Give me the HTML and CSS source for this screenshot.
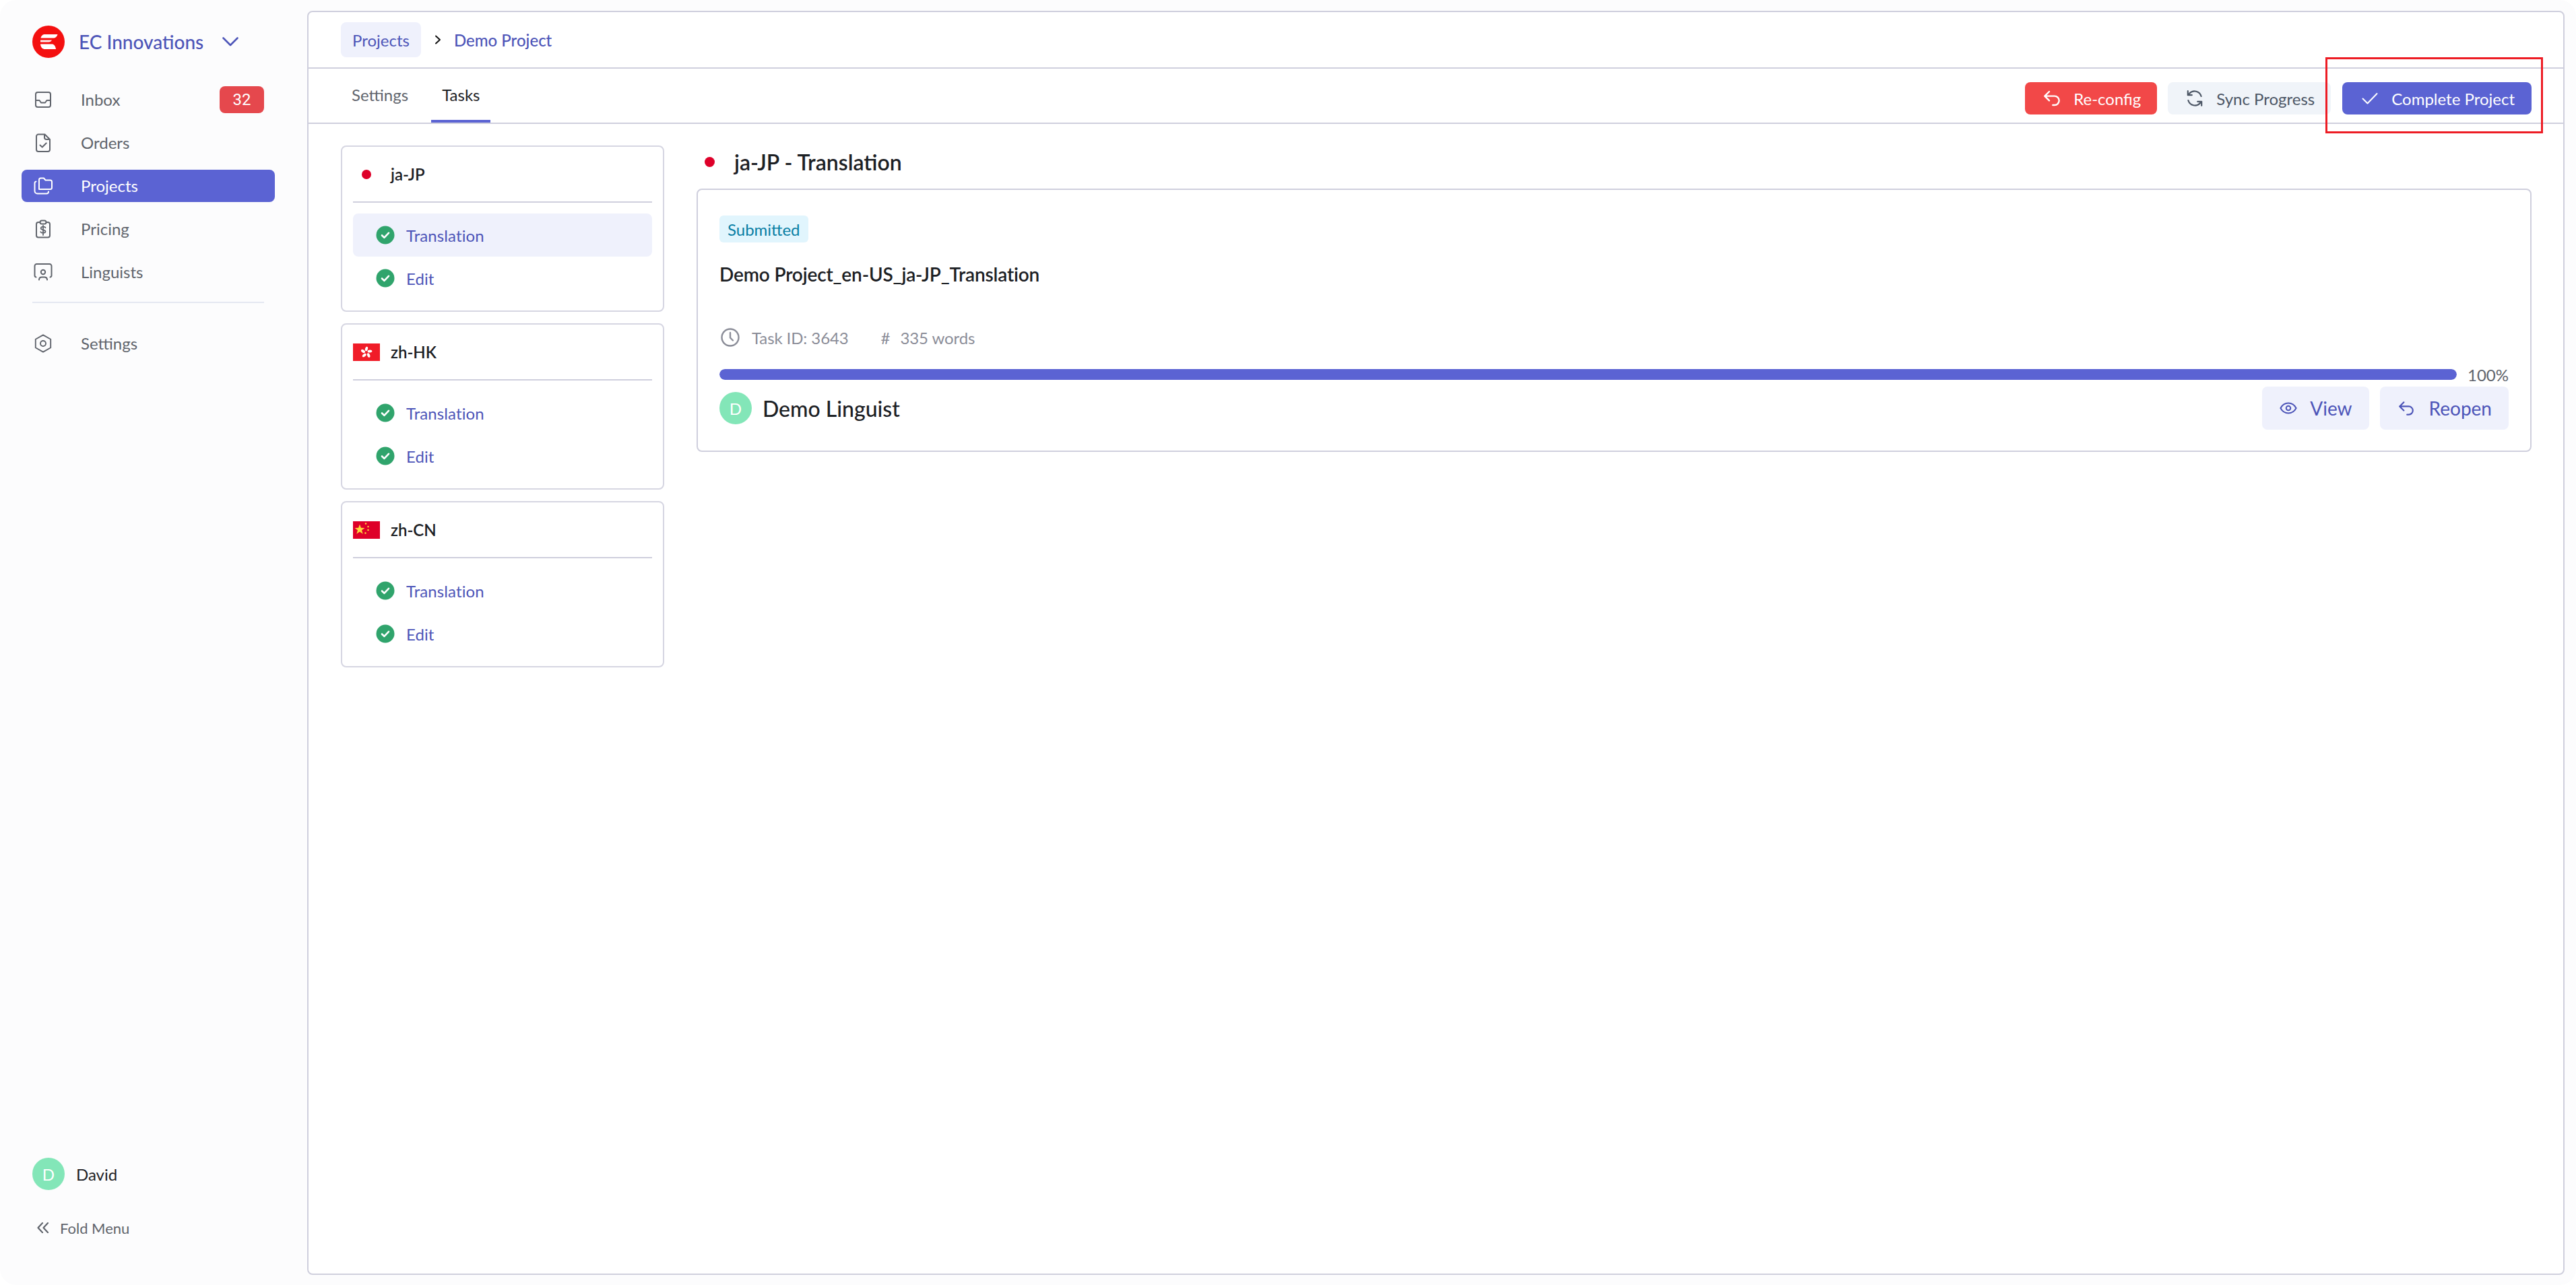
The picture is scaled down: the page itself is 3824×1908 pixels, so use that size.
FILE: index.html
```html
<!DOCTYPE html>
<html lang="en">
<head>
<meta charset="utf-8">
<title>Demo Project</title>
<link rel="stylesheet" href="styles.css">
</head>
<body>
<svg class="sprite" width="0" height="0">
  <defs>
    <symbol id="check-circle" viewBox="0 0 28 28">
      <circle cx="14" cy="14" r="13.5" fill="#30a46c"/>
      <path d="M9 14.5l3.4 3.3L19 10.8" fill="none" stroke="#fff" stroke-width="2.6" stroke-linecap="round" stroke-linejoin="round"/>
    </symbol>
    <symbol id="reply" viewBox="3 4 18 17">
      <path d="M9 5L4 10l5 5M4 10h11a5 5 0 0 1 5 5 5 5 0 0 1-5 5h-2" fill="none" stroke="currentColor" stroke-width="1.8" stroke-linecap="round" stroke-linejoin="round"/>
    </symbol>
    <symbol id="jp-dot" viewBox="0 0 14 14"><circle cx="7" cy="7" r="7" fill="#de0029"/></symbol>
  </defs>
</svg>
<div class="app">
  <aside class="sidebar">
    <div class="brand">
      <svg class="logo" viewBox="0 0 48 48">
        <circle cx="24" cy="24" r="24" fill="#f41010"/>
        <path d="M19 13h18.500c-1 3.500-3 5.500-7 5.500H12.500C13 15 15.500 13 19 13z" fill="#fff"/>
        <path d="M12 21.500h17c-1 2-2.500 3-5 3H12z" fill="#fff" opacity=".92"/>
        <path d="M12 27.500h17c3 0 5 2 6 7.500H19c-4 0-6.500-2.500-7-7.500z" fill="#fff"/>
      </svg>
      <span class="brand-name">EC Innovations</span>
      <svg class="brand-caret" viewBox="0 0 24 14"><path d="M1.500 1.500L12 12 22.500 1.500" fill="none" stroke="#4d55b8" stroke-width="2.600" stroke-linecap="round" stroke-linejoin="round"/></svg>
    </div>
    <nav class="nav">
      <a class="nav-item">
        <svg class="nav-icon" viewBox="0 0 24 24"><rect x="1" y="1" width="22" height="22" rx="3" fill="none" stroke="currentColor" stroke-width="2"/><path d="M1 13h5.500l2.500 3.500h6l2.500-3.500H23" fill="none" stroke="currentColor" stroke-width="2" stroke-linejoin="round"/></svg>
        <span class="nav-label">Inbox</span><span class="nav-badge">32</span>
      </a>
      <a class="nav-item">
        <svg class="nav-icon" viewBox="0 0 24 28"><path d="M5 1.500h9.500L22 9v15a3 3 0 0 1-3 3H5a3 3 0 0 1-3-3V4.500a3 3 0 0 1 3-3z" fill="none" stroke="currentColor" stroke-width="2" stroke-linejoin="round"/><path d="M14 1.500V6a3 3 0 0 0 3 3h5" fill="none" stroke="currentColor" stroke-width="2"/><path d="M7.500 17.500l3.200 3 6-6" fill="none" stroke="currentColor" stroke-width="2" stroke-linecap="round" stroke-linejoin="round"/></svg>
        <span class="nav-label">Orders</span>
      </a>
      <a class="nav-item nav-active">
        <svg class="nav-icon nav-icon-wide" viewBox="0 0 28 26"><path d="M8 18V4a2.500 2.500 0 0 1 2.500-2.500h4.500l2.500 3h7a2.500 2.500 0 0 1 2.500 2.500v8.500a2.500 2.500 0 0 1-2.500 2.500H8z" fill="none" stroke="currentColor" stroke-width="2" stroke-linejoin="round"/><path d="M3.500 6.500A2.500 2.500 0 0 0 1.500 9v11.500A4 4 0 0 0 5.500 24.500H19a3 3 0 0 0 3-3" fill="none" stroke="currentColor" stroke-width="2" stroke-linecap="round"/></svg>
        <span class="nav-label">Projects</span>
      </a>
      <a class="nav-item">
        <svg class="nav-icon" viewBox="0 0 24 28"><rect x="2" y="4" width="20" height="22.500" rx="3" fill="none" stroke="currentColor" stroke-width="2"/><rect x="7.500" y="1.500" width="9" height="5" rx="2.500" fill="#fcfcfd" stroke="currentColor" stroke-width="2"/><path d="M15.500 12c-.5-1-1.800-1.300-3.500-1.300-2 0-3.300.8-3.300 2.300 0 3 6.800 1.500 6.800 4.600 0 1.500-1.500 2.300-3.500 2.300-1.800 0-3.200-.5-3.700-1.600M12 9v14" fill="none" stroke="currentColor" stroke-width="1.800" stroke-linecap="round"/></svg>
        <span class="nav-label">Pricing</span>
      </a>
      <a class="nav-item">
        <svg class="nav-icon nav-icon-wide" viewBox="0 0 28 26"><path d="M3.500 20.500A2.500 2.500 0 0 1 1.500 18V4a3 3 0 0 1 3-3h19a3 3 0 0 1 3 3v14a2.500 2.500 0 0 1-2 2.500" fill="none" stroke="currentColor" stroke-width="2" stroke-linecap="round"/><circle cx="14" cy="13" r="3.200" fill="none" stroke="currentColor" stroke-width="2"/><path d="M8 24.500v-.500a4 4 0 0 1 4-3.500h4a4 4 0 0 1 4 3.500v.500" fill="none" stroke="currentColor" stroke-width="2" stroke-linecap="round"/></svg>
        <span class="nav-label">Linguists</span>
      </a>
      <div class="nav-divider"></div>
      <a class="nav-item">
        <svg class="nav-icon nav-icon-wide" viewBox="0 0 28 30"><path d="M14 1.500l12 6.800v13.400l-12 6.800-12-6.800V8.300z" fill="none" stroke="currentColor" stroke-width="2" stroke-linejoin="round"/><circle cx="14" cy="15" r="4.300" fill="none" stroke="currentColor" stroke-width="2"/></svg>
        <span class="nav-label">Settings</span>
      </a>
    </nav>
    <div class="sidebar-foot">
      <div class="user"><span class="avatar">D</span><span class="user-name">David</span></div>
      <div class="fold">
        <svg class="fold-icon" viewBox="0 0 18 16"><path d="M8 1L1.500 8 8 15M16 1L9.500 8 16 15" fill="none" stroke="#60646c" stroke-width="2.200" stroke-linecap="round" stroke-linejoin="round"/></svg>
        <span>Fold Menu</span>
      </div>
    </div>
  </aside>
  <main class="panel">
    <header class="crumbs">
      <span class="crumb-chip">Projects</span>
      <svg class="crumb-sep" viewBox="0 0 10 14"><path d="M2 1.500L8 7l-6 5.500" fill="none" stroke="#111" stroke-width="2" stroke-linecap="round" stroke-linejoin="round"/></svg>
      <span class="crumb-current">Demo Project</span>
    </header>
    <div class="tabbar">
      <div class="tabs">
        <span class="tab">Settings</span>
        <span class="tab tab-active">Tasks</span>
      </div>
      <div class="actions">
        <button class="btn btn-red"><svg class="btn-icon"><use href="#reply"/></svg>Re-config</button>
        <button class="btn btn-gray"><svg class="btn-icon" viewBox="2 2 20 20"><path d="M20 9.500A8.500 8.500 0 0 0 5.500 6L3.500 8M3.500 3v5h5M4 14.500A8.500 8.500 0 0 0 18.500 18l2-2M20.500 21v-5h-5" fill="none" stroke="currentColor" stroke-width="1.800" stroke-linecap="round" stroke-linejoin="round"/></svg>Sync Progress</button>
        <span class="highlight">
          <button class="btn btn-blue"><svg class="btn-icon" viewBox="0 0 24 24"><path d="M1.500 12.500l7 7L22.500 5" fill="none" stroke="currentColor" stroke-width="2" stroke-linecap="round" stroke-linejoin="round"/></svg>Complete Project</button>
        </span>
      </div>
    </div>
    <div class="content">
      <section class="langs">
        <div class="lang-card">
          <div class="lang-head"><span class="flag-slot"><svg class="jp-dot"><use href="#jp-dot"/></svg></span><span class="lang-name">ja-JP</span></div>
          <div class="task-row task-active"><svg class="check"><use href="#check-circle"/></svg><span>Translation</span></div>
          <div class="task-row"><svg class="check"><use href="#check-circle"/></svg><span>Edit</span></div>
        </div>
        <div class="lang-card">
          <div class="lang-head">
            <span class="flag-slot"><svg class="flag" viewBox="0 0 40 26">
              <rect width="40" height="26" fill="#f01c28"/>
              <g fill="#fff">
                <ellipse cx="20" cy="8" rx="2" ry="3.400" transform="rotate(15 20 8)"/>
                <ellipse cx="25" cy="11.500" rx="2" ry="3.400" transform="rotate(87 25 11.500)"/>
                <ellipse cx="23.200" cy="17.500" rx="2" ry="3.400" transform="rotate(159 23.200 17.500)"/>
                <ellipse cx="16.800" cy="17.500" rx="2" ry="3.400" transform="rotate(231 16.800 17.500)"/>
                <ellipse cx="15" cy="11.500" rx="2" ry="3.400" transform="rotate(303 15 11.500)"/>
              </g>
            </svg></span>
            <span class="lang-name">zh-HK</span>
          </div>
          <div class="task-row"><svg class="check"><use href="#check-circle"/></svg><span>Translation</span></div>
          <div class="task-row"><svg class="check"><use href="#check-circle"/></svg><span>Edit</span></div>
        </div>
        <div class="lang-card">
          <div class="lang-head">
            <span class="flag-slot"><svg class="flag" viewBox="0 0 40 26">
              <rect width="40" height="26" fill="#de0029"/>
              <g fill="#ffd83d">
                <path d="M10 4.500l1.900 5.300 5.600.1-4.500 3.400 1.700 5.400L10 15.500l-4.700 3.200L7 13.300 2.500 9.900l5.600-.1z"/>
                <circle cx="19" cy="3.500" r="1.200"/><circle cx="22.500" cy="8" r="1.200"/><circle cx="22.500" cy="13" r="1.200"/><circle cx="18.500" cy="17.500" r="1.200"/>
              </g>
            </svg></span>
            <span class="lang-name">zh-CN</span>
          </div>
          <div class="task-row"><svg class="check"><use href="#check-circle"/></svg><span>Translation</span></div>
          <div class="task-row"><svg class="check"><use href="#check-circle"/></svg><span>Edit</span></div>
        </div>
      </section>
      <section class="detail">
        <h2 class="detail-title"><svg class="title-dot"><use href="#jp-dot"/></svg>ja-JP - Translation</h2>
        <article class="task-card">
          <span class="status">Submitted</span>
          <h3 class="task-name">Demo Project_en-US_ja-JP_Translation</h3>
          <div class="meta">
            <svg class="clock" viewBox="0 0 28 28"><circle cx="14" cy="14" r="12.500" fill="none" stroke="currentColor" stroke-width="2.400"/><path d="M14 7v7.500l4 4" fill="none" stroke="currentColor" stroke-width="2.400" stroke-linecap="round" stroke-linejoin="round"/></svg>
            <span class="meta-id">Task ID: 3643</span>
            <span class="meta-hash">#</span>
            <span>335 words</span>
          </div>
          <div class="progress-row">
            <div class="progress"><div class="progress-fill"></div></div>
            <span class="percent">100%</span>
          </div>
          <div class="task-foot">
            <span class="avatar">D</span>
            <span class="assignee">Demo Linguist</span>
            <button class="soft-btn"><svg class="soft-icon" viewBox="0 0 28 24"><path d="M1.500 12C4.500 6.500 9 4 14 4s9.500 2.500 12.500 8c-3 5.500-7.500 8-12.500 8S4.500 17.500 1.500 12z" fill="none" stroke="currentColor" stroke-width="2.200" stroke-linejoin="round"/><circle cx="14" cy="12" r="3.500" fill="none" stroke="currentColor" stroke-width="2.200"/></svg>View</button>
            <button class="soft-btn soft-btn-reopen"><svg class="soft-icon soft-icon-reply"><use href="#reply"/></svg>Reopen</button>
          </div>
        </article>
      </section>
    </div>
  </main>
</div>
</body>
</html>
```

FILE: styles.css
```css
* { box-sizing: border-box; }
html, body { margin: 0; height: 100%; background: #fff; }
body { font-family: "Lato", "Liberation Sans", sans-serif; color: #1c2024; overflow: hidden; }
.sprite { position: absolute; }
button { font-family: inherit; border: 0; cursor: pointer; }
h2, h3 { margin: 0; }

.app { display: flex; width: 3824px; height: 1908px; background: #fcfcfd; border-radius: 24px; }

.sidebar { width: 456px; flex: none; display: flex; flex-direction: column; padding: 38px 48px 0 32px; }
.brand { display: flex; align-items: center; height: 48px; padding-left: 16px; }
.logo { width: 48px; height: 48px; flex: none; }
.brand-name { margin-left: 21px; font-size: 28px; font-weight: 500; color: #4d55b8; }
.brand-caret { width: 24px; height: 14px; margin-left: 28px; }

.nav { display: flex; flex-direction: column; margin-top: 30px; }
.nav-item { display: flex; align-items: center; height: 64px; padding: 0 16px 0 20px; color: #60646c; font-size: 24px; }
.nav-item:nth-child(3) { height: 48px; border-radius: 8px; margin: 8px 0; }
.nav-active { background: #5b63d3; color: #fff; }
.nav-icon { width: 24px; height: 28px; flex: none; }
.nav-icon-wide { width: 28px; margin-left: -2px; margin-right: -2px; }
.nav-label { margin-left: 44px; padding-bottom: 2px; }
.nav-badge { margin-left: auto; width: 66px; height: 40px; border-radius: 8px; background: #e5484d; color: #fff; font-family: Roboto, sans-serif; font-size: 24px; display: flex; align-items: center; justify-content: center; }
.nav-divider { height: 2px; margin: 12px 16px 28px; background: #e4e8f1; }

.sidebar-foot { margin-top: auto; padding: 0 0 69px 16px; }
.user { display: flex; align-items: center; height: 48px; }
.user-name { margin-left: 17px; font-size: 24px; color: #1c2024; }
.avatar { width: 48px; height: 48px; flex: none; border-radius: 50%; background: #83e6b8; color: #fff; font-family: "Lato", sans-serif; font-size: 24px; display: flex; align-items: center; justify-content: center; }
.fold { display: flex; align-items: center; height: 32px; margin-top: 40px; padding-left: 7px; color: #60646c; font-size: 22px; }
.fold-icon { width: 18px; height: 16px; margin-right: 16px; }

.panel { flex: 1; margin: 16px 17px 15px 0; display: flex; flex-direction: column; background: #fff; border: 2px solid #cfcfdd; border-radius: 8px; min-width: 0; }
.crumbs { display: flex; align-items: center; height: 84px; flex: none; padding: 0 48px; border-bottom: 2px solid #cfcfdd; }
.crumb-chip { display: flex; align-items: center; height: 52px; padding: 0 17px; border-radius: 8px; background: #eff1fc; color: #4d55b8; font-size: 24px; }
.crumb-sep { width: 10px; height: 14px; margin: 0 19px 0 20px; }
.crumb-current { font-size: 24px; font-weight: 500; color: #4d55b8; }

.tabbar { display: flex; align-items: stretch; justify-content: space-between; height: 82px; flex: none; padding-left: 48px; padding-right: 47px; border-bottom: 2px solid #cfcfdd; }
.tabs { display: flex; }
.tab { display: flex; align-items: center; padding: 0 16px 4px; font-size: 24px; color: #60646c; }
.tab-active { color: #1c2024; box-shadow: inset 0 -4px 0 #5b63d3; margin-left: 18px; }
.actions { display: flex; align-items: center; gap: 16px; padding-top: 8px; }
.btn { display: flex; align-items: center; height: 48px; border-radius: 8px; font-size: 24px; padding: 0 24px 0 28px; white-space: nowrap; }
.btn-icon { width: 24px; height: 24px; margin-right: 20px; flex: none; }
.btn-red { background: #f24848; color: #fff; }
.btn-gray { background: #f0f4f9; color: #4c5665; }
.btn-blue { background: #5b63d3; color: #fff; padding: 0 25px 0 29px; }
.highlight { display: block; position: relative; margin-left: 1px; }
.highlight::after { content: ""; position: absolute; left: -25px; right: -17px; top: -37px; bottom: -28px; border: 3px solid #ed1c24; pointer-events: none; }

.content { flex: 1; display: flex; align-items: flex-start; gap: 48px; padding: 32px 47px 0 48px; }
.langs { width: 480px; flex: none; display: flex; flex-direction: column; gap: 17px; }
.lang-card { display: flex; flex-direction: column; height: 247px; padding: 0 16px; border: 2px solid #d6d6e2; border-radius: 8px; background: #fff; }
.lang-head { display: flex; align-items: center; gap: 16px; height: 83px; flex: none; margin-bottom: 16px; border-bottom: 2px solid #cfcfdd; font-size: 24px; font-weight: 700; color: #1c2024; }
.flag-slot { width: 40px; height: 26px; flex: none; display: flex; align-items: center; justify-content: center; }
.flag { width: 40px; height: 26px; display: block; }
.jp-dot { width: 14px; height: 14px; display: block; }
.lang-name { font-weight: 600; }
.task-row { display: flex; align-items: center; height: 64px; flex: none; padding-left: 35px; color: #4d55b8; font-size: 24px; border-radius: 8px; letter-spacing: 0.1px; }
.task-active { background: #eff1fc; }
.check { width: 28px; height: 28px; margin-right: 17px; flex: none; margin-left: -1px; }

.detail { flex: 1; min-width: 0; display: flex; flex-direction: column; }
.detail-title { display: flex; align-items: center; height: 48px; padding-left: 12px; margin-bottom: 16px; font-size: 32px; font-weight: 600; color: #1c2024; }
.title-dot { width: 15px; height: 15px; margin-right: 29px; flex: none; }
.task-card { display: flex; flex-direction: column; align-items: flex-start; height: 391px; padding: 38px 32px 0; border: 2px solid #cfcfdd; border-radius: 8px; }
.status { display: flex; align-items: center; height: 40px; padding: 0 12px; border-radius: 6px; background: #e1f5fd; color: #087ea4; font-size: 24px; }
.task-name { margin-top: 25px; height: 44px; line-height: 44px; font-size: 28px; font-weight: 600; color: #1c2024; letter-spacing: -0.15px; }
.meta { display: flex; align-items: center; height: 32px; margin-top: 56px; color: #8b8d98; font-size: 24px; letter-spacing: -0.1px; }
.clock { width: 28px; height: 28px; margin-left: 2px; margin-right: 18px; flex: none; }
.meta-hash { margin-left: 48px; margin-right: 15px; }
.progress-row { display: flex; align-items: center; align-self: stretch; height: 32px; margin-top: 23px; }
.progress { flex: 1; height: 16px; border-radius: 8px; background: #eff1fc; overflow: hidden; }
.progress-fill { width: 100%; height: 100%; background: #5b63d3; border-radius: 8px; }
.percent { margin-left: 16px; font-size: 24px; color: #60646c; }
.task-foot { display: flex; align-items: center; align-self: stretch; height: 64px; margin-top: 2px; }
.assignee { margin-left: 16px; margin-right: auto; font-size: 32px; font-weight: 500; color: #1c2024; }
.soft-btn { display: flex; align-items: center; height: 64px; padding: 0 25px 0 26px; margin-left: 16px; border-radius: 8px; background: #eff1fc; color: #4d55b8; font-size: 28px; }
.soft-btn-reopen { padding-left: 28px; }
.soft-icon { width: 26px; height: 24px; margin-right: 19px; flex: none; }
.soft-icon-reply { width: 22px; height: 21px; margin-right: 23px; }
```
